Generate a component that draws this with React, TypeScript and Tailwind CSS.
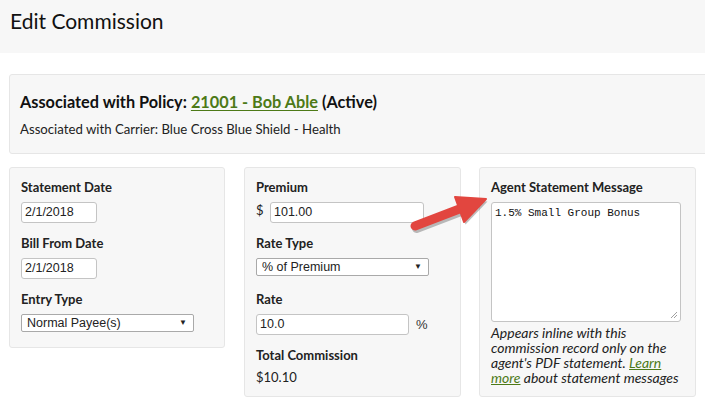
import React from "react";

const sans = { fontFamily: "Lato, 'Noto Sans', sans-serif" };

function Label({ children, className = "" }: { children: React.ReactNode; className?: string }) {
  return <div className={"text-[13px] font-bold leading-[20px] text-[#222] " + className}>{children}</div>;
}

function TextInput({ value, w }: { value: string; w: string }) {
  return (
    <div
      className={"h-[21px] border border-[#c4c4c4] rounded-[3px] bg-white px-[3px] flex items-center text-[12.5px] text-[#222] " + w}
      style={{ fontFamily: "'Liberation Sans', Arial, sans-serif" }}
    >
      {value}
    </div>
  );
}

function Select({ value, w }: { value: string; w: string }) {
  return (
    <div
      className={"h-[18px] border border-[#a9a9a9] rounded-[2px] bg-white pl-[5px] pr-[6px] flex items-center justify-between text-[12.5px] text-[#222] " + w}
      style={{ fontFamily: "'Liberation Sans', Arial, sans-serif" }}
    >
      <span>{value}</span>
      <span className="text-[8px] leading-none">▼</span>
    </div>
  );
}

export default function App() {
  return (
    <div className="relative w-[705px] h-[400px] overflow-hidden bg-white" style={sans}>
      <div className="h-[53px] bg-[#f7f7f7] pl-[10px] flex items-center">
        <h1 className="text-[21px] text-[#111] pb-[12px]">Edit Commission</h1>
      </div>
      <div className="pl-[9px] pt-[21px]">
        <div className="w-[720px] h-[80px] border border-[#e6e6e6] rounded-[3px] bg-[#f7f7f7] pl-[10px] pt-[16px]">
          <div className="text-[16.3px] font-bold leading-[22px] text-[#111]">
            Associated with Policy:{" "}
            <span className="text-[#4d7a17] underline underline-offset-2">21001 - Bob Able</span> (Active)
          </div>
          <div className="text-[13.2px] leading-[18px] text-[#222] mt-[7px]">
            Associated with Carrier: Blue Cross Blue Shield - Health
          </div>
        </div>
        <div className="flex items-start mt-[13px]">
          <div className="w-[216px] border border-[#e6e6e6] rounded-[3px] bg-[#f7f7f7] pl-[11px] pt-[9px] pb-[15px]">
            <Label>Statement Date</Label>
            <div className="mt-[5px]"><TextInput value="2/1/2018" w="w-[76px]" /></div>
            <Label className="mt-[10px]">Bill From Date</Label>
            <div className="mt-[5px]"><TextInput value="2/1/2018" w="w-[76px]" /></div>
            <Label className="mt-[10px]">Entry Type</Label>
            <div className="mt-[5px]"><Select value="Normal Payee(s)" w="w-[173px]" /></div>
          </div>
          <div className="ml-[19px] w-[217px] h-[230px] border border-[#e6e6e6] rounded-[3px] bg-[#f7f7f7] pl-[11px] pt-[9px]">
            <Label>Premium</Label>
            <div className="mt-[5px] flex items-start">
              <span className="text-[13px] leading-[16px] text-[#222] w-[14px]">$</span>
              <TextInput value="101.00" w="w-[154px]" />
            </div>
            <Label className="mt-[10px]">Rate Type</Label>
            <div className="mt-[5px]"><Select value="% of Premium" w="w-[173px]" /></div>
            <Label className="mt-[13px]">Rate</Label>
            <div className="mt-[5px] flex items-center">
              <TextInput value="10.0" w="w-[153px]" />
              <span className="ml-[7px] text-[13px] text-[#333]" style={{ fontFamily: "'Liberation Sans', Arial, sans-serif" }}>%</span>
            </div>
            <Label className="mt-[10px]">Total Commission</Label>
            <div className="mt-[2px] text-[13px] leading-[20px] text-[#222]">$10.10</div>
          </div>
          <div className="ml-[18px] w-[217px] h-[230px] border border-[#e6e6e6] rounded-[3px] bg-[#f7f7f7] pl-[11px] pt-[9px]">
            <Label>Agent Statement Message</Label>
            <div
              className="mt-[5px] w-[190px] h-[120px] border border-[#c4c4c4] rounded-[3px] bg-white px-[3px] pt-[3px] text-[11px] leading-[14px] text-[#111] relative"
              style={{ fontFamily: "'Liberation Mono', 'DejaVu Sans Mono', monospace" }}
            >
              1.5% Small Group Bonus
              <svg className="absolute right-[2px] bottom-[2px]" width="8" height="8" viewBox="0 0 8 8">
                <line x1="1" y1="7" x2="7" y2="1" stroke="#888" strokeWidth="0.8" />
                <line x1="4" y1="7" x2="7" y2="4" stroke="#888" strokeWidth="0.8" />
              </svg>
            </div>
            <div className="mt-[3px] whitespace-nowrap text-[14px] leading-[15px] italic text-[#222]">
              Appears inline with this
              <br />
              commission record only on the
              <br />
              agent's PDF statement. <span className="text-[#4d7a17] underline">Learn</span>
              <br />
              <span className="text-[#4d7a17] underline">more</span> about statement messages
            </div>
          </div>
        </div>
      </div>
      <svg className="absolute left-0 top-0 pointer-events-none" width="705" height="400">
        <g transform="translate(1.5,2.5)" opacity="0.25">
          <line x1="415" y1="226" x2="462" y2="208" stroke="#000" strokeWidth="9" strokeLinecap="round" />
          <polygon points="455,197 486,199 464,222" fill="#000" />
        </g>
        <line x1="415" y1="226" x2="462" y2="208" stroke="#e2463f" strokeWidth="9" strokeLinecap="round" />
        <polygon points="455,197 486,199 464,222" fill="#e2463f" strokeLinejoin="round" stroke="#e2463f" strokeWidth="2" />
      </svg>
    </div>
  );
}
